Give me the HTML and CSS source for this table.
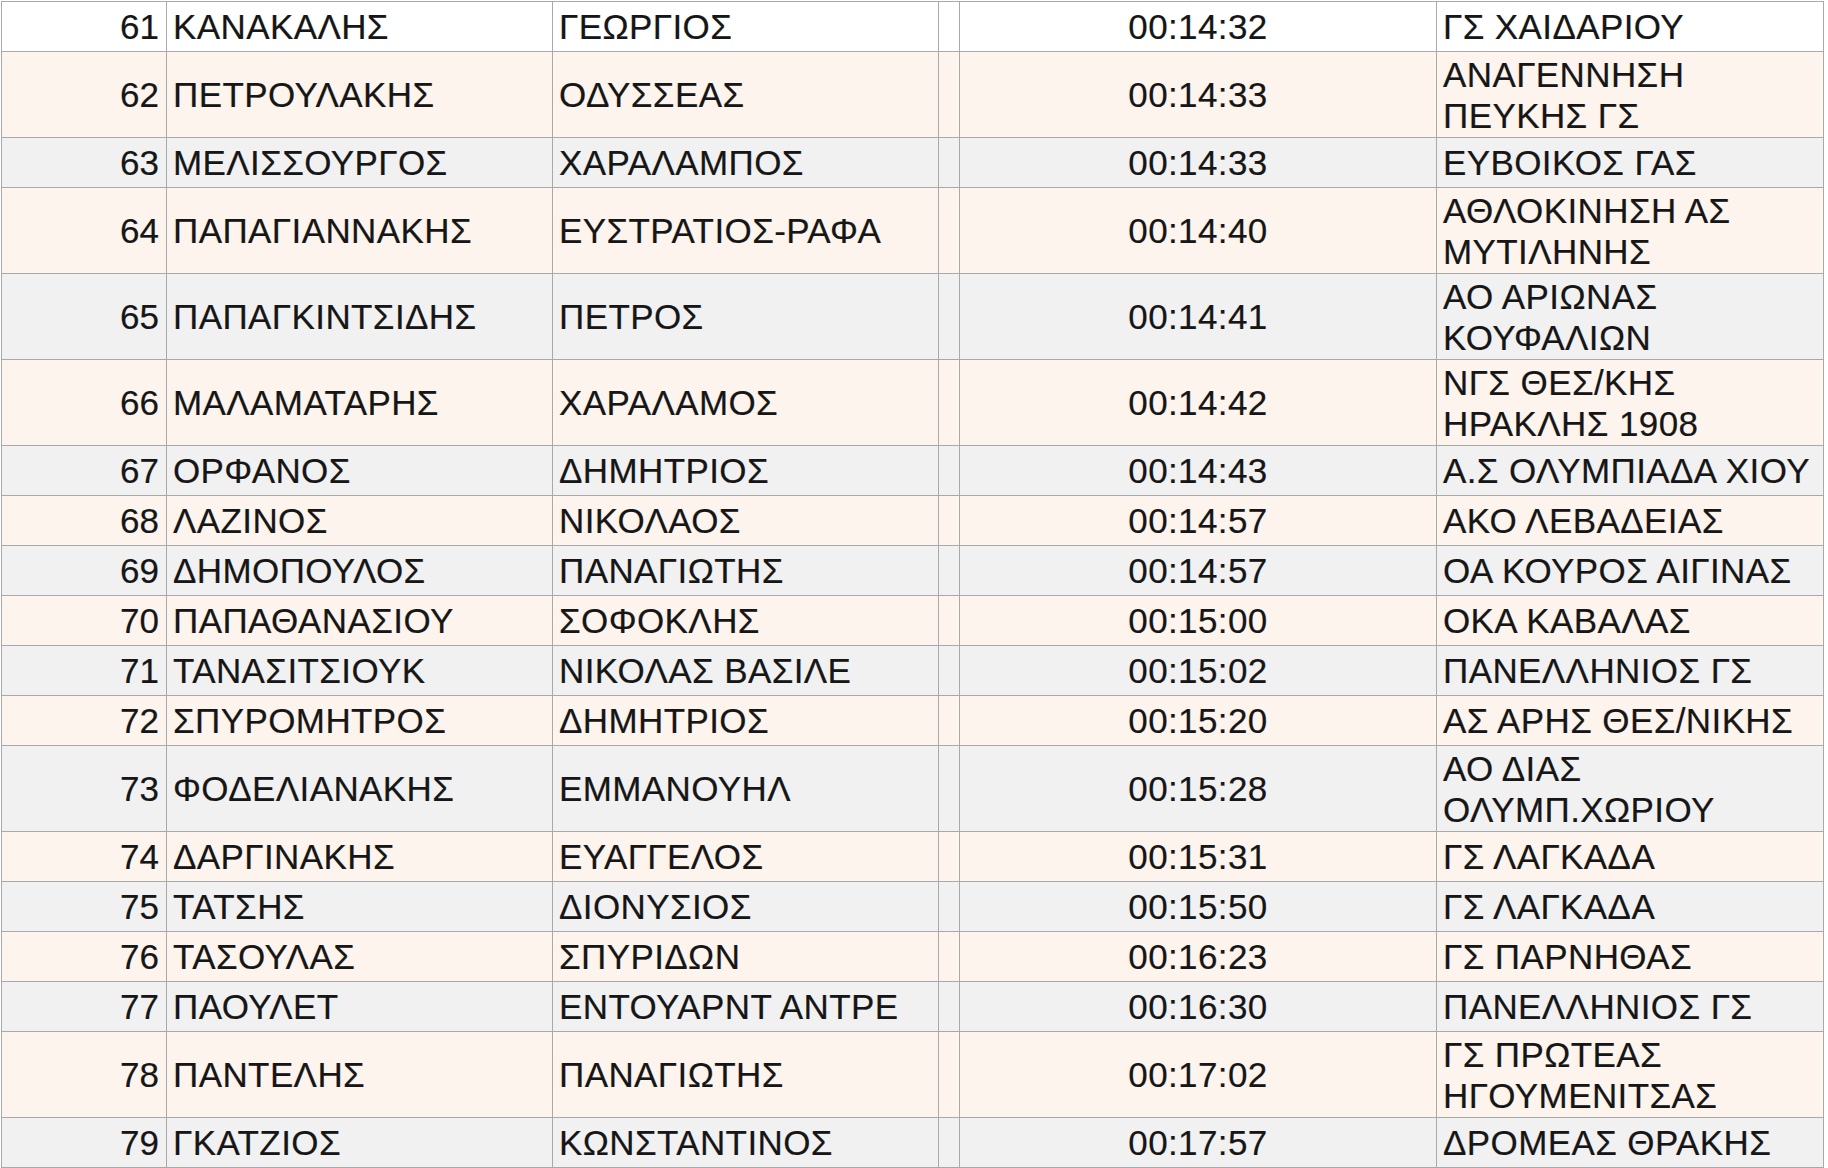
FILE: index.html
```html
<!DOCTYPE html>
<html lang="el">
<head>
<meta charset="utf-8">
<title>Αποτελέσματα</title>
<link rel="stylesheet" href="styles.css">
</head>
<body>
<table class="results">
  <colgroup>
    <col class="c-pos"><col class="c-last"><col class="c-first"><col class="c-gap"><col class="c-time"><col class="c-club">
  </colgroup>
  <tbody>
    <tr class="r-white"><td class="pos">61</td><td>ΚΑΝΑΚΑΛΗΣ</td><td>ΓΕΩΡΓΙΟΣ</td><td></td><td class="time">00:14:32</td><td>ΓΣ ΧΑΙΔΑΡΙΟΥ</td></tr>
    <tr class="r-peach"><td class="pos">62</td><td>ΠΕΤΡΟΥΛΑΚΗΣ</td><td>ΟΔΥΣΣΕΑΣ</td><td></td><td class="time">00:14:33</td><td>ΑΝΑΓΕΝΝΗΣΗ<br>ΠΕΥΚΗΣ ΓΣ</td></tr>
    <tr class="r-gray"><td class="pos">63</td><td>ΜΕΛΙΣΣΟΥΡΓΟΣ</td><td>ΧΑΡΑΛΑΜΠΟΣ</td><td></td><td class="time">00:14:33</td><td>ΕΥΒΟΙΚΟΣ ΓΑΣ</td></tr>
    <tr class="r-peach"><td class="pos">64</td><td>ΠΑΠΑΓΙΑΝΝΑΚΗΣ</td><td>ΕΥΣΤΡΑΤΙΟΣ-ΡΑΦΑ</td><td></td><td class="time">00:14:40</td><td>ΑΘΛΟΚΙΝΗΣΗ ΑΣ<br>ΜΥΤΙΛΗΝΗΣ</td></tr>
    <tr class="r-gray"><td class="pos">65</td><td>ΠΑΠΑΓΚΙΝΤΣΙΔΗΣ</td><td>ΠΕΤΡΟΣ</td><td></td><td class="time">00:14:41</td><td>ΑΟ ΑΡΙΩΝΑΣ<br>ΚΟΥΦΑΛΙΩΝ</td></tr>
    <tr class="r-peach"><td class="pos">66</td><td>ΜΑΛΑΜΑΤΑΡΗΣ</td><td>ΧΑΡΑΛΑΜΟΣ</td><td></td><td class="time">00:14:42</td><td>ΝΓΣ ΘΕΣ/ΚΗΣ<br>ΗΡΑΚΛΗΣ 1908</td></tr>
    <tr class="r-gray"><td class="pos">67</td><td>ΟΡΦΑΝΟΣ</td><td>ΔΗΜΗΤΡΙΟΣ</td><td></td><td class="time">00:14:43</td><td>Α.Σ ΟΛΥΜΠΙΑΔΑ ΧΙΟΥ</td></tr>
    <tr class="r-peach"><td class="pos">68</td><td>ΛΑΖΙΝΟΣ</td><td>ΝΙΚΟΛΑΟΣ</td><td></td><td class="time">00:14:57</td><td>ΑΚΟ ΛΕΒΑΔΕΙΑΣ</td></tr>
    <tr class="r-gray"><td class="pos">69</td><td>ΔΗΜΟΠΟΥΛΟΣ</td><td>ΠΑΝΑΓΙΩΤΗΣ</td><td></td><td class="time">00:14:57</td><td>ΟΑ ΚΟΥΡΟΣ ΑΙΓΙΝΑΣ</td></tr>
    <tr class="r-peach"><td class="pos">70</td><td>ΠΑΠΑΘΑΝΑΣΙΟΥ</td><td>ΣΟΦΟΚΛΗΣ</td><td></td><td class="time">00:15:00</td><td>ΟΚΑ ΚΑΒΑΛΑΣ</td></tr>
    <tr class="r-gray"><td class="pos">71</td><td>ΤΑΝΑΣΙΤΣΙΟΥΚ</td><td>ΝΙΚΟΛΑΣ ΒΑΣΙΛΕ</td><td></td><td class="time">00:15:02</td><td>ΠΑΝΕΛΛΗΝΙΟΣ ΓΣ</td></tr>
    <tr class="r-peach"><td class="pos">72</td><td>ΣΠΥΡΟΜΗΤΡΟΣ</td><td>ΔΗΜΗΤΡΙΟΣ</td><td></td><td class="time">00:15:20</td><td>ΑΣ ΑΡΗΣ ΘΕΣ/ΝΙΚΗΣ</td></tr>
    <tr class="r-gray"><td class="pos">73</td><td>ΦΟΔΕΛΙΑΝΑΚΗΣ</td><td>ΕΜΜΑΝΟΥΗΛ</td><td></td><td class="time">00:15:28</td><td>ΑΟ ΔΙΑΣ<br>ΟΛΥΜΠ.ΧΩΡΙΟΥ</td></tr>
    <tr class="r-peach"><td class="pos">74</td><td>ΔΑΡΓΙΝΑΚΗΣ</td><td>ΕΥΑΓΓΕΛΟΣ</td><td></td><td class="time">00:15:31</td><td>ΓΣ ΛΑΓΚΑΔΑ</td></tr>
    <tr class="r-gray"><td class="pos">75</td><td>ΤΑΤΣΗΣ</td><td>ΔΙΟΝΥΣΙΟΣ</td><td></td><td class="time">00:15:50</td><td>ΓΣ ΛΑΓΚΑΔΑ</td></tr>
    <tr class="r-peach"><td class="pos">76</td><td>ΤΑΣΟΥΛΑΣ</td><td>ΣΠΥΡΙΔΩΝ</td><td></td><td class="time">00:16:23</td><td>ΓΣ ΠΑΡΝΗΘΑΣ</td></tr>
    <tr class="r-gray"><td class="pos">77</td><td>ΠΑΟΥΛΕΤ</td><td>ΕΝΤΟΥΑΡΝΤ ΑΝΤΡΕ</td><td></td><td class="time">00:16:30</td><td>ΠΑΝΕΛΛΗΝΙΟΣ ΓΣ</td></tr>
    <tr class="r-peach"><td class="pos">78</td><td>ΠΑΝΤΕΛΗΣ</td><td>ΠΑΝΑΓΙΩΤΗΣ</td><td></td><td class="time">00:17:02</td><td>ΓΣ ΠΡΩΤΕΑΣ<br>ΗΓΟΥΜΕΝΙΤΣΑΣ</td></tr>
    <tr class="r-gray"><td class="pos">79</td><td>ΓΚΑΤΖΙΟΣ</td><td>ΚΩΝΣΤΑΝΤΙΝΟΣ</td><td></td><td class="time">00:17:57</td><td>ΔΡΟΜΕΑΣ ΘΡΑΚΗΣ</td></tr>
  </tbody>
</table>
</body>
</html>
```
FILE: styles.css
```css
html, body {
  margin: 0;
  padding: 0;
  background: #ffffff;
}
body {
  padding: 1px 0 0 1px;
  font-family: "Liberation Sans", Arial, Helvetica, sans-serif;
  color: #161616;
}
.results {
  border-collapse: collapse;
  table-layout: fixed;
  width: 1822px;
  font-size: 35px;
  line-height: 41px;
  letter-spacing: 0.4px;
}
.c-pos { width: 165px; }
.c-last { width: 386px; }
.c-first { width: 386px; }
.c-gap { width: 21px; }
.c-time { width: 477px; }
.c-club { width: 387px; }
.results tr { height: 50px; }
.results td {
  border: 1px solid #a9a9a9;
  padding: 1.5px 6px;
  white-space: nowrap;
  vertical-align: middle;
  overflow: hidden;
  -webkit-text-stroke: 0.2px #161616;
}
.results td.pos {
  text-align: right;
  padding-right: 7px;
  letter-spacing: 0;
}
.results td.time {
  text-align: center;
}
.r-white { background: #ffffff; }
.r-peach { background: #fdf4ed; }
.r-gray { background: #f1f1f1; }
```
